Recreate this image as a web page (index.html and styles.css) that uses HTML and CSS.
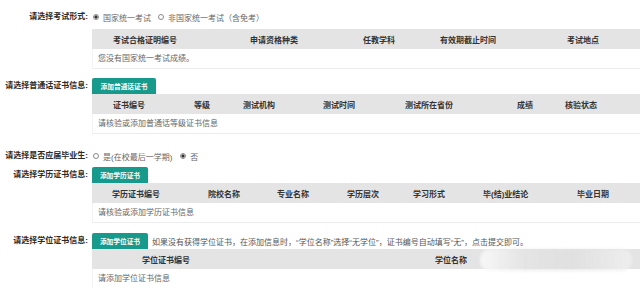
FILE: index.html
```html
<!DOCTYPE html>
<html lang="zh-CN">
<head>
<meta charset="utf-8">
<title>证书信息</title>
<link rel="stylesheet" href="styles.css">
</head>
<body>
<div class="page">
  <div class="field first">
    <div class="label radio-label">请选择考试形式:</div>
    <div class="content">
      <div class="radios">
        <span class="radio checked"></span><span class="opt">国家统一考试</span>
        <span class="radio gap"></span><span class="opt">非国家统一考试（含免考）</span>
      </div>
      <div class="table t1">
        <div class="thead">
          <span>考试合格证明编号</span><span>申请资格种类</span><span>任教学科</span><span>有效期截止时间</span><span>考试地点</span>
        </div>
        <div class="tbody">您没有国家统一考试成绩。</div>
      </div>
    </div>
  </div>

  <div class="field sec2">
    <div class="label">请选择普通话证书信息:</div>
    <div class="content">
      <div class="btnline"><span class="btn wide">添加普通话证书</span></div>
      <div class="table t2">
        <div class="thead">
          <span>证书编号</span><span>等级</span><span>测试机构</span><span>测试时间</span><span>测试所在省份</span><span>成绩</span><span>核验状态</span>
        </div>
        <div class="tbody">请核验或添加普通话等级证书信息</div>
      </div>
    </div>
  </div>

  <div class="field sec3">
    <div class="label radio-label">请选择是否应届毕业生:</div>
    <div class="content">
      <div class="radios">
        <span class="radio"></span><span class="opt">是(在校最后一学期)</span>
        <span class="radio checked gap2"></span><span class="opt">否</span>
      </div>
    </div>
  </div>

  <div class="field sec4">
    <div class="label">请选择学历证书信息:</div>
    <div class="content">
      <div class="btnline"><span class="btn">添加学历证书</span></div>
      <div class="table t3">
        <div class="thead">
          <span>学历证书编号</span><span>院校名称</span><span>专业名称</span><span>学历层次</span><span>学习形式</span><span>毕(结)业结论</span><span>毕业日期</span>
        </div>
        <div class="tbody">请核验或添加学历证书信息</div>
      </div>
    </div>
  </div>

  <div class="field sec5">
    <div class="label">请选择学位证书信息:</div>
    <div class="content">
      <div class="btnline"><span class="btn">添加学位证书</span><span class="hint">如果没有获得学位证书，在添加信息时，“学位名称”选择“无学位”，证书编号自动填写“无”，点击提交即可。</span></div>
      <div class="table t4">
        <div class="thead">
          <span>学位证书编号</span><span>学位名称</span>
        </div>
        <div class="tbody">请添加学位证书信息</div>
      </div>
    </div>
  </div>
  <div class="smudge"></div>
</div>
</body>
</html>
```

FILE: styles.css
```css
html, body {
  margin: 0;
  padding: 0;
  background: #ffffff;
}
body {
  font-family: "Liberation Sans", "Noto Sans CJK SC", sans-serif;
  font-size: 8px;
  color: #555;
  width: 640px;
  height: 288px;
  overflow: hidden;
}
.page {
  position: relative;
  width: 640px;
  height: 288px;
}
.field {
  display: grid;
  grid-template-columns: 92px 1fr;
}
.first { padding-top: 8px; }
.sec2 { margin-top: 9px; }
.sec3 { margin-top: 13px; }
.sec4 { margin-top: 2px; }
.sec5 { margin-top: 10px; }

.label {
  text-align: right;
  padding-right: 4px;
  font-weight: bold;
  color: #2b2b2b;
  line-height: 16px;
  height: 16px;
  white-space: nowrap;
}
.radio-label {
  line-height: 18px;
  height: 18px;
}
.content {
  display: flex;
  flex-direction: column;
  min-width: 0;
}
.radios {
  display: flex;
  align-items: center;
  height: 18px;
  color: #666;
  white-space: nowrap;
}
.radio {
  width: 6px;
  height: 6px;
  box-sizing: border-box;
  border: 1px solid #8a8a8a;
  border-radius: 50%;
  margin-left: 1px;
  margin-right: 4px;
  background: #fff;
}
.radio.checked {
  background: radial-gradient(circle, #333 0 1.4px, #fff 1.8px);
}
.radio.gap { margin-left: 7px; margin-right: 4px; }
.radio.gap2 { margin-left: 8px; margin-right: 4px; }

.table {
  display: flex;
  flex-direction: column;
}
.first .table { margin-top: 3px; }
.thead {
  display: grid;
  align-items: center;
  height: 20px;
  background: #e4e4e4;
  font-weight: bold;
  color: #333;
  white-space: nowrap;
}
.t1 .thead { padding-left: 21px; grid-template-columns: 137px 113px 77px 127px 1fr; }
.t2 .thead { padding-left: 21px; grid-template-columns: 81px 49px 80px 82px 112px 48px 1fr; }
.t3 .thead { padding-left: 20px; grid-template-columns: 96px 69px 70px 66px 70px 94px 1fr; }
.t4 .thead { padding-left: 50px; grid-template-columns: 293px 1fr; }

.tbody {
  height: 19px;
  line-height: 19px;
  padding-left: 5px;
  color: #666;
  border-bottom: 1px solid #ececec;
  border-left: 1px solid #f3f3f3;
  white-space: nowrap;
}

.btnline {
  display: flex;
  align-items: center;
  height: 16px;
  white-space: nowrap;
}
.btn {
  display: inline-flex;
  align-items: center;
  justify-content: center;
  width: 56px;
  height: 16px;
  background: #179a8b;
  color: #fff;
  font-size: 6.7px;
  font-weight: bold;
  border-radius: 2px 2px 0 0;
}
.btn.wide { width: 64px; }
.hint {
  margin-left: 4px;
  color: #555;
}

.smudge {
  position: absolute;
  left: 480px;
  top: 249px;
  width: 152px;
  height: 22px;
  border-radius: 10px;
  background: linear-gradient(90deg, rgba(250,250,250,0.85), rgba(228,228,228,0.6) 30%, rgba(220,220,220,0.5) 60%, rgba(240,240,240,0.8));
  filter: blur(1.5px);
}
```
